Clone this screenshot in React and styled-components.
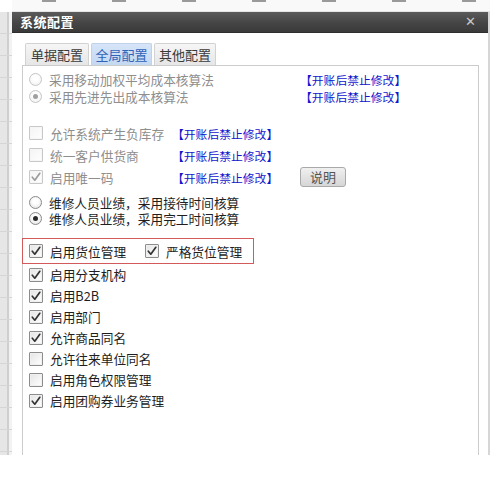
import React from "react";
import styled, { createGlobalStyle, css } from "styled-components";

const Global = createGlobalStyle`
  html, body { margin: 0; padding: 0; background: #ffffff; }
  body { font-family: "Noto Sans CJK SC", "Noto Sans", sans-serif; }
  * { box-sizing: border-box; }
`;

const Page = styled.div`
  width: 502px;
  height: 479px;
  display: flex;
  flex-direction: column;
  background: #ffffff;
`;

const TopStrip = styled.div`
  height: 12px;
  margin-left: 12px;
  width: 478px;
  background:
    repeating-linear-gradient(90deg, transparent 0 30px, #9a9a9a 30px 44px, transparent 44px 70px) top / 100% 2px no-repeat,
    #f9f9f9;
  border-bottom: 1px solid #e4e4e4;
`;

const Stage = styled.div`
  height: 443px;
  display: flex;
`;

const LeftStrip = styled.div`
  width: 12px;
  background:
    linear-gradient(90deg, #e6e6e6 0 7px, #cfcfcf 7px 9px, #f2f2f2 9px 12px),
    #ececec;
  position: relative;
  &::after {
    content: "";
    position: absolute;
    inset: 0;
    background: repeating-linear-gradient(180deg, transparent 0 21px, #d6d6d6 21px 22px);
  }
`;

const Dialog = styled.div`
  width: 478px;
  display: flex;
  flex-direction: column;
  background: #ffffff;
  border-right: 2px solid #d6d6d6;
`;

const TitleBar = styled.div`
  height: 21px;
  display: flex;
  align-items: center;
  justify-content: space-between;
  padding: 0 12px 0 8px;
  background: linear-gradient(180deg, #5a5a5a 0%, #454545 55%, #3a3a3a 100%);
  border-bottom: 1px solid #2e2e2e;
`;

const Title = styled.span`
  display: block;
  color: #ffffff;
  font-size: 13px;
  line-height: 14px;
  font-weight: 700;
  letter-spacing: 0.5px;
`;

const Close = styled.span`
  display: block;
  color: #c8c8c8;
  font-family: "DejaVu Sans", sans-serif;
  font-size: 13px;
  line-height: 14px;
  font-weight: 700;
`;

const Body = styled.div`
  flex: 1;
  display: flex;
  flex-direction: column;
  padding: 10px 9px 0 10px;
`;

const Tabs = styled.div`
  display: flex;
  gap: 2px;
  margin-left: 3px;
  height: 22px;
`;

const Tab = styled.div`
  width: ${(p) => p.$w}px;
  display: flex;
  align-items: center;
  justify-content: center;
  font-size: 13px;
  line-height: 14px;
  border: 1px solid #d2d2d2;
  border-bottom: none;
  border-radius: 2px 2px 0 0;
  color: #3a3a3a;
  background: linear-gradient(180deg, #f6f6f6, #e6e6e6);
  ${(p) =>
    p.$active &&
    css`
      color: #2f63b8;
      background: linear-gradient(180deg, #d6e5f8, #c4d8f2);
      border-color: #c0d2ea;
    `}
`;

const Panel = styled.div`
  flex: 1;
  border: 1px solid #cccccc;
  border-bottom: none;
  padding: 5px 6px 0 6px;
  display: flex;
  flex-direction: column;
`;

const Row = styled.div`
  height: ${(p) => p.$h}px;
  display: flex;
  align-items: center;
  flex-shrink: 0;
`;

const Gap = styled.div`
  height: ${(p) => p.$h}px;
  flex-shrink: 0;
`;

const Cell = styled.div`
  width: ${(p) => p.$w}px;
  flex-shrink: 0;
  display: flex;
  align-items: center;
`;

const OptionWrap = styled.label`
  display: flex;
  align-items: center;
  gap: 7px;
  width: ${(p) => (p.$w ? `${p.$w}px` : "auto")};
  flex-shrink: 0;
`;

const Text = styled.span`
  display: block;
  font-size: 12.7px;
  line-height: 13px;
  white-space: nowrap;
  color: ${(p) => (p.$disabled ? "#8e8e8e" : "#1e1e1e")};
`;

const Radio = styled.span`
  width: 13px;
  height: 13px;
  border-radius: 50%;
  flex-shrink: 0;
  display: flex;
  align-items: center;
  justify-content: center;
  border: 1px solid ${(p) => (p.$disabled ? "#c6c6c6" : "#8a8a8a")};
  background: radial-gradient(circle at 50% 40%, #ffffff 30%, ${(p) => (p.$disabled ? "#ececec" : "#dcdcdc")} 100%);
  &::after {
    content: "";
    width: 5px;
    height: 5px;
    border-radius: 50%;
    display: ${(p) => (p.$checked ? "block" : "none")};
    background: ${(p) => (p.$disabled ? "#a0a0a0" : "#2b2b2b")};
  }
`;

const Check = styled.span`
  width: 14px;
  height: 14px;
  flex-shrink: 0;
  display: flex;
  align-items: center;
  justify-content: center;
  border: 1px solid ${(p) => (p.$disabled ? "#c8c8c8" : "#8c8c8c")};
  border-radius: 1px;
  background: linear-gradient(135deg, ${(p) => (p.$disabled ? "#f4f4f4" : "#e4e4e4")} 0%, #ffffff 100%);
  box-shadow: inset 0 0 0 1px ${(p) => (p.$disabled ? "#f6f6f6" : "#f0f0f0")};
`;

const Note = styled.span`
  display: block;
  font-size: 11.8px;
  line-height: 13px;
  color: #1414cc;
  white-space: nowrap;
`;

const Button = styled.button`
  width: 46px;
  height: 20px;
  padding: 0;
  border: 1px solid #a9a9a9;
  border-radius: 3px;
  background: linear-gradient(180deg, #f0f0f0, #d6d6d6);
  font-family: inherit;
  font-size: 13px;
  line-height: 14px;
  color: #555555;
  display: flex;
  align-items: center;
  justify-content: center;
`;

const Highlight = styled.div`
  width: 232px;
  height: 26px;
  margin-left: -7px;
  padding-left: 6px;
  border: 1px solid #d35a5a;
  display: flex;
  align-items: center;
  flex-shrink: 0;
`;

function Option({ type, checked, disabled, label, w }) {
  return (
    <OptionWrap $w={w}>
      {type === "radio" ? (
        <Radio $checked={checked} $disabled={disabled} />
      ) : (
        <Check $disabled={disabled}>
          {checked && (
            <svg width="10" height="10" viewBox="0 0 10 10">
              <path
                d="M1.3 5.2 L3.8 8.2 L8.8 1.3"
                fill="none"
                stroke={disabled ? "#9c9c9c" : "#333333"}
                strokeWidth="1.7"
                strokeLinecap="round"
                strokeLinejoin="round"
              />
            </svg>
          )}
        </Check>
      )}
      <Text $disabled={disabled}>{label}</Text>
    </OptionWrap>
  );
}

const NOTE = "【开账后禁止修改】";

const lockedRadios = [
  { label: "采用移动加权平均成本核算法", checked: false },
  { label: "采用先进先出成本核算法", checked: true },
];

const lockedChecks = [
  { label: "允许系统产生负库存", checked: false },
  { label: "统一客户供货商", checked: false },
  { label: "启用唯一码", checked: true, help: true },
];

const repairRadios = [
  { label: "维修人员业绩，采用接待时间核算", checked: false },
  { label: "维修人员业绩，采用完工时间核算", checked: true },
];

const moreChecks = [
  { label: "启用分支机构", checked: true },
  { label: "启用B2B", checked: true },
  { label: "启用部门", checked: true },
  { label: "允许商品同名", checked: true },
  { label: "允许往来单位同名", checked: false },
  { label: "启用角色权限管理", checked: false },
  { label: "启用团购券业务管理", checked: true },
];

export default function App() {
  return (
    <Page>
      <Global />
      <TopStrip />
      <Stage>
        <LeftStrip />
        <Dialog>
          <TitleBar>
            <Title>系统配置</Title>
            <Close>✕</Close>
          </TitleBar>
          <Body>
            <Tabs>
              <Tab $w={64}>单据配置</Tab>
              <Tab $w={61} $active>全局配置</Tab>
              <Tab $w={62}>其他配置</Tab>
            </Tabs>
            <Panel>
              {lockedRadios.map((r) => (
                <Row key={r.label} $h={17}>
                  <Cell $w={271}>
                    <Option type="radio" disabled checked={r.checked} label={r.label} />
                  </Cell>
                  <Note>{NOTE}</Note>
                </Row>
              ))}
              <Gap $h={17} />
              {lockedChecks.map((c) => (
                <Row key={c.label} $h={22}>
                  <Cell $w={143}>
                    <Option type="check" disabled checked={c.checked} label={c.label} />
                  </Cell>
                  <Cell $w={128}>
                    <Note>{NOTE}</Note>
                  </Cell>
                  {c.help && <Button>说明</Button>}
                </Row>
              ))}
              <Gap $h={6} />
              {repairRadios.map((r) => (
                <Row key={r.label} $h={16}>
                  <Option type="radio" checked={r.checked} label={r.label} />
                </Row>
              ))}
              <Gap $h={12} />
              <Highlight>
                <Option type="check" checked label="启用货位管理" w={116} />
                <Option type="check" checked label="严格货位管理" />
              </Highlight>
              {moreChecks.map((c) => (
                <Row key={c.label} $h={21}>
                  <Option type="check" checked={c.checked} label={c.label} />
                </Row>
              ))}
            </Panel>
          </Body>
        </Dialog>
      </Stage>
    </Page>
  );
}
